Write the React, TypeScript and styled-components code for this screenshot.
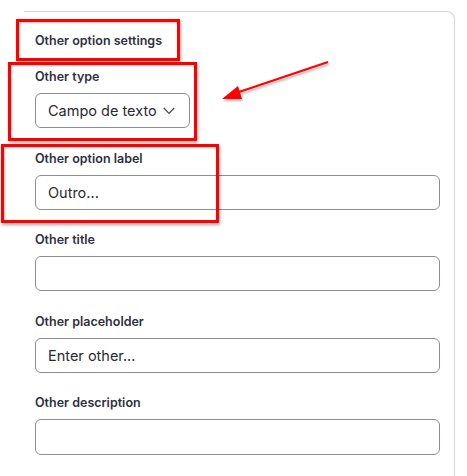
import React from 'react';
import styled, { createGlobalStyle } from 'styled-components';

const GlobalStyle = createGlobalStyle`
  body {
    margin: 0;
    background: #ffffff;
    font-family: Inter, "Noto Sans", sans-serif;
  }
`;

const Page = styled.div`
  position: relative;
  width: 467px;
  height: 476px;
  overflow: hidden;
  background: #fff;
`;

const Card = styled.div`
  margin: 11px 0 0 24px;
  width: 431px;
  height: 520px;
  border-top: 1px solid #d6d6d9;
  border-right: 1px solid #d6d6d9;
  border-top-right-radius: 8px;
  padding: 21px 14px 0 11px;
  box-sizing: border-box;
  display: flex;
  flex-direction: column;
`;

const SectionTitle = styled.div`
  font-size: 12.5px;
  font-weight: 600;
  line-height: 16px;
  color: #30313d;
  margin-bottom: 20px;
`;

const Fields = styled.div`
  display: flex;
  flex-direction: column;
  gap: 22.4px;
`;

const Field = styled.div`
  display: flex;
  flex-direction: column;
  gap: 8px;
`;

const Label = styled.div`
  font-size: 12.5px;
  font-weight: 600;
  line-height: 16px;
  color: #30313d;
`;

const Box = styled.div<{ $width?: number }>`
  width: ${(p) => (p.$width ? `${p.$width}px` : '100%')};
  height: 35.2px;
  box-sizing: border-box;
  border: 1px solid #8b8e99;
  border-radius: 6px;
  padding: 0 14px 0 12px;
  display: flex;
  align-items: center;
  justify-content: space-between;
  font-size: 14.5px;
  color: #2a2a30;
`;

const Chevron = styled.svg`
  flex-shrink: 0;
`;

const Highlight = styled.div<{ $x: number; $y: number; $w: number; $h: number }>`
  position: absolute;
  left: ${(p) => p.$x}px;
  top: ${(p) => p.$y}px;
  width: ${(p) => p.$w}px;
  height: ${(p) => p.$h}px;
  box-sizing: border-box;
  border: 3px solid #ff0000;
  box-shadow: 1px 2px 3px rgba(0, 0, 0, 0.35), inset 1px 1px 2px rgba(0, 0, 0, 0.25);
  pointer-events: none;
`;

const Arrow = styled.svg`
  position: absolute;
  left: 0;
  top: 0;
  pointer-events: none;
`;

const fields = [
  { label: 'Other option label', value: 'Outro...' },
  { label: 'Other title', value: '' },
  { label: 'Other placeholder', value: 'Enter other...' },
  { label: 'Other description', value: '' },
];

const App: React.FC = () => (
  <Page>
    <GlobalStyle />
    <Card>
      <SectionTitle>Other option settings</SectionTitle>
      <Fields>
        <Field>
          <Label>Other type</Label>
          <Box $width={155}>
            Campo de texto
            <Chevron width={12} height={8} viewBox="0 0 12 8">
              <polyline points="0.8,1 6,6.4 11.2,1" fill="none" stroke="#4a4b55" strokeWidth={1.3} />
            </Chevron>
          </Box>
        </Field>
        {fields.map((f) => (
          <Field key={f.label}>
            <Label>{f.label}</Label>
            <Box>{f.value}</Box>
          </Field>
        ))}
      </Fields>
    </Card>

    <Highlight $x={16} $y={19} $w={164} $h={42} />
    <Highlight $x={8} $y={62} $w={189} $h={79} />
    <Highlight $x={1} $y={144} $w={218} $h={79} />

    <Arrow width={467} height={476}>
      <defs>
        <filter id="sh" x="-20%" y="-20%" width="140%" height="160%">
          <feDropShadow dx="1" dy="2" stdDeviation="1.2" floodColor="#000" floodOpacity="0.3" />
        </filter>
      </defs>
      <g filter="url(#sh)">
        <line x1={328} y1={62} x2={236} y2={93} stroke="#ff0000" strokeWidth={2} />
        <polygon points="222,99 238,86 242,99" fill="#ff0000" />
      </g>
    </Arrow>
  </Page>
);

export default App;
